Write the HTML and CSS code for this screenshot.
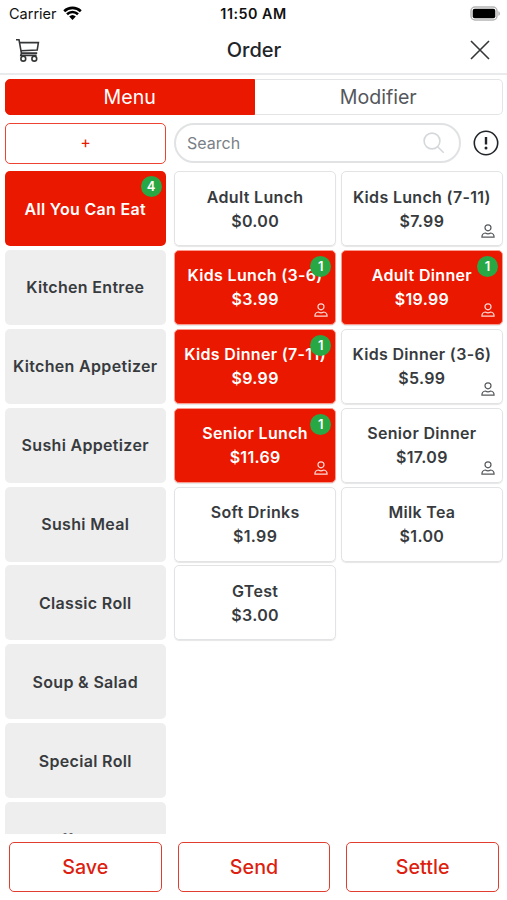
FILE: index.html
```html
<!DOCTYPE html>
<html lang="en">
<head>
    <meta charset="UTF-8">
    <meta name="viewport" content="width=device-width, initial-scale=1.0">
    <title>Order</title>
    <link rel="stylesheet" href="styles.css">
</head>
<body>
    <svg class="defs" width="0" height="0">
        <symbol id="person" viewBox="0 0 14 14">
            <circle cx="7" cy="3.8" r="3"/>
            <path d="M.9 13.2c0-2.8 1.4-4 3.5-4.2 1.6 1 3.6 1 5.2 0 2.1.2 3.5 1.4 3.5 4.2z"/>
        </symbol>
    </svg>

    <div class="status-bar">
        <div class="carrier">
            <span>Carrier</span>
            <svg class="wifi" width="19" height="14" viewBox="0 0 19 14">
                <path d="M1.2 5.2a12 12 0 0 1 16.6 0M4 8.2a8 8 0 0 1 11 0"/>
                <path class="dot" d="M6.2 10.6a4.8 4.8 0 0 1 6.6 0L9.5 13.9z"/>
            </svg>
        </div>
        <div class="time">11:50 AM</div>
        <svg class="battery" width="31" height="15" viewBox="0 0 31 15">
            <rect class="shell" x="1" y="1" width="26" height="13" rx="4"/>
            <rect x="2.7" y="2.7" width="22.6" height="9.6" rx="2"/>
            <path class="tip" d="M28.3 5.2c2.3.6 2.3 4 0 4.6z"/>
        </svg>
    </div>

    <header class="header">
        <svg width="26" height="26" viewBox="0 0 26 26">
            <path d="M1 2.7h3l2.4 13.4h15.8M4.6 5.6h18.8l-1.2 7.5-16.1.7M6.4 16.1l-.6 2.3h15.8"/>
            <circle cx="8.3" cy="21.7" r="2.4"/>
            <circle cx="19.3" cy="21.7" r="2.4"/>
        </svg>
        <h1>Order</h1>
        <svg width="20" height="20" viewBox="0 0 20 20">
            <path d="M1 1l18 18M19 1L1 19"/>
        </svg>
    </header>

    <nav class="tabs">
        <button class="tab active">Menu</button>
        <button class="tab">Modifier</button>
    </nav>

    <div class="toolbar">
        <button class="add">+</button>
        <div class="search">
            <span>Search</span>
            <svg width="22" height="22" viewBox="0 0 22 22">
                <circle cx="9" cy="9" r="7.9"/>
                <path d="M14.7 14.7l6 6"/>
            </svg>
        </div>
        <svg class="info" width="26" height="26" viewBox="0 0 26 26">
            <circle cx="13" cy="13" r="11.7"/>
            <path d="M13 7v7.5"/>
            <circle class="dot" cx="13" cy="18" r="1.5"/>
        </svg>
    </div>

    <main class="content">
        <div class="categories">
            <div class="category active">All You Can Eat<span class="badge">4</span></div>
            <div class="category">Kitchen Entree</div>
            <div class="category">Kitchen Appetizer</div>
            <div class="category">Sushi Appetizer</div>
            <div class="category">Sushi Meal</div>
            <div class="category">Classic Roll</div>
            <div class="category">Soup &amp; Salad</div>
            <div class="category">Special Roll</div>
            <div class="category">Off Menu</div>
        </div>

        <div class="products">
            <div class="product">
                <span>Adult Lunch</span><span class="price">$0.00</span>
            </div>
            <div class="product">
                <span>Kids Lunch (7-11)</span><span class="price">$7.99</span>
                <svg class="person"><use href="#person"/></svg>
            </div>
            <div class="product active">
                <span>Kids Lunch (3-6)</span><span class="price">$3.99</span>
                <span class="badge">1</span>
                <svg class="person"><use href="#person"/></svg>
            </div>
            <div class="product active">
                <span>Adult Dinner</span><span class="price">$19.99</span>
                <span class="badge">1</span>
                <svg class="person"><use href="#person"/></svg>
            </div>
            <div class="product active">
                <span>Kids Dinner (7-11)</span><span class="price">$9.99</span>
                <span class="badge">1</span>
            </div>
            <div class="product">
                <span>Kids Dinner (3-6)</span><span class="price">$5.99</span>
                <svg class="person"><use href="#person"/></svg>
            </div>
            <div class="product active">
                <span>Senior Lunch</span><span class="price">$11.69</span>
                <span class="badge">1</span>
                <svg class="person"><use href="#person"/></svg>
            </div>
            <div class="product">
                <span>Senior Dinner</span><span class="price">$17.09</span>
                <svg class="person"><use href="#person"/></svg>
            </div>
            <div class="product">
                <span>Soft Drinks</span><span class="price">$1.99</span>
            </div>
            <div class="product">
                <span>Milk Tea</span><span class="price">$1.00</span>
            </div>
            <div class="product">
                <span>GTest</span><span class="price">$3.00</span>
            </div>
        </div>
    </main>

    <footer class="footer">
        <button>Save</button>
        <button>Send</button>
        <button>Settle</button>
    </footer>
</body>
</html>
```
FILE: styles.css
```css
* {
    box-sizing: border-box;
}
body {
    margin: 0;
    height: 900px;
    display: flex;
    flex-direction: column;
    overflow: hidden;
    background-color: #fff;
    color: #383b3e;
    font-family: Inter, "Liberation Sans", sans-serif;
}
button {
    padding: 0;
    font-family: inherit;
    background-color: #fff;
    cursor: pointer;
}
svg {
    display: block;
    fill: none;
    stroke: #343638;
    stroke-width: 1.6;
}
.defs {
    position: absolute;
}

/* Status bar */
.status-bar {
    display: grid;
    grid-template-columns: 1fr auto 1fr;
    align-items: center;
    height: 27px;
    padding: 0 6px 0 9px;
    color: #111;
    font-size: 14.5px;
}
.carrier {
    display: flex;
    align-items: center;
    gap: 6px;
}
.carrier .wifi {
    margin-top: -2px;
    stroke: #000;
    stroke-width: 2.6;
}
.wifi .dot {
    fill: #000;
    stroke: none;
}
.time {
    padding-right: 3px;
    font-weight: 600;
    font-size: 14.3px;
    letter-spacing: 0.5px;
}
.battery {
    justify-self: end;
    fill: #000;
    stroke: none;
}
.battery .shell {
    fill: #fff;
    stroke: #b5b5b5;
    stroke-width: 1.5;
}
.battery .tip {
    fill: #b5b5b5;
}

/* Header */
.header {
    display: flex;
    align-items: center;
    justify-content: space-between;
    height: 48px;
    padding: 0 17px 0 15px;
    border-bottom: 2px solid #e9eaeb;
}
.header h1 {
    margin: 0 3px 0 0;
    font-size: 20px;
    font-weight: 500;
    color: #212529;
}

/* Tabs */
.tabs {
    display: flex;
    height: 36px;
    margin: 4px 4px 0 5px;
}
.tab {
    flex: 1;
    border: 1.5px solid #e2e4e5;
    border-left: 0;
    border-radius: 0 5px 5px 0;
    font-size: 19.6px;
    color: #54585c;
}
.tab.active {
    border: 1px solid #eb1800;
    border-radius: 5px 0 0 5px;
    background-color: #eb1800;
    color: #fff;
}

/* Add, search, info */
.toolbar {
    display: flex;
    align-items: center;
    height: 42px;
    margin: 7px 8px 0 5px;
}
.add {
    width: 161px;
    height: 41px;
    margin-right: 8px;
    padding-bottom: 2px;
    border: 1.5px solid #ec4433;
    border-radius: 5px;
    font-size: 16px;
    color: #eb1800;
}
.search {
    display: flex;
    align-items: center;
    justify-content: space-between;
    width: 287px;
    height: 40px;
    padding: 0 14px 0 11px;
    border: 2px solid #e0e2e4;
    border-radius: 20px;
    font-size: 16px;
    color: #7a8086;
}
.search svg {
    stroke: #d5d8da;
    stroke-width: 1.6;
}
.info {
    margin-left: auto;
    stroke: #212529;
}
.info path {
    stroke-width: 2.4;
}
.info .dot {
    fill: #212529;
    stroke: none;
}

/* Menu */
.content {
    flex: 1;
    min-height: 0;
    display: flex;
    gap: 8.5px;
    padding: 7px 4px 0 5px;
    overflow: hidden;
    font-size: 16px;
    font-weight: 600;
    letter-spacing: 0.32px;
}
.categories {
    display: flex;
    flex-direction: column;
    gap: 3.9px;
    width: 160.5px;
}
.category {
    position: relative;
    flex: 0 0 75px;
    display: flex;
    align-items: center;
    justify-content: center;
    border-radius: 5px;
    background-color: #eee;
}
.products {
    flex: 1;
    display: grid;
    grid-template-columns: 1fr 1fr;
    grid-auto-rows: 75px;
    align-content: start;
    gap: 3.9px 4.5px;
}
.product {
    position: relative;
    display: flex;
    flex-direction: column;
    align-items: center;
    justify-content: center;
    border: 1.5px solid #e2e3e4;
    border-radius: 5px;
    line-height: 24px;
    white-space: nowrap;
    box-shadow: 0 1px 1px #e6e6e6;
}
.category.active,
.product.active {
    background-color: #eb1800;
    color: #fff;
}
.product.active {
    border-color: #fb9a8f;
    border-width: 1px;
}
.badge {
    position: absolute;
    top: 5px;
    right: 4px;
    width: 21px;
    height: 21px;
    border-radius: 50%;
    background-color: #28a745;
    color: #fff;
    font-size: 13px;
    line-height: 21px;
    letter-spacing: 0;
    text-align: center;
}
.person {
    position: absolute;
    right: 7px;
    bottom: 7px;
    width: 14px;
    height: 14px;
    stroke: #55585b;
    stroke-width: 1.2;
}
.product.active .person {
    stroke: #ffd9d4;
}

/* Footer */
.footer {
    display: flex;
    gap: 16px;
    height: 66px;
    padding: 8px 8px 8px 9px;
}
.footer button {
    flex: 1;
    padding-bottom: 1px;
    border: 1.5px solid #e23e30;
    border-radius: 5px;
    font-size: 19.7px;
    font-weight: 500;
    color: #dc1f10;
}
```
